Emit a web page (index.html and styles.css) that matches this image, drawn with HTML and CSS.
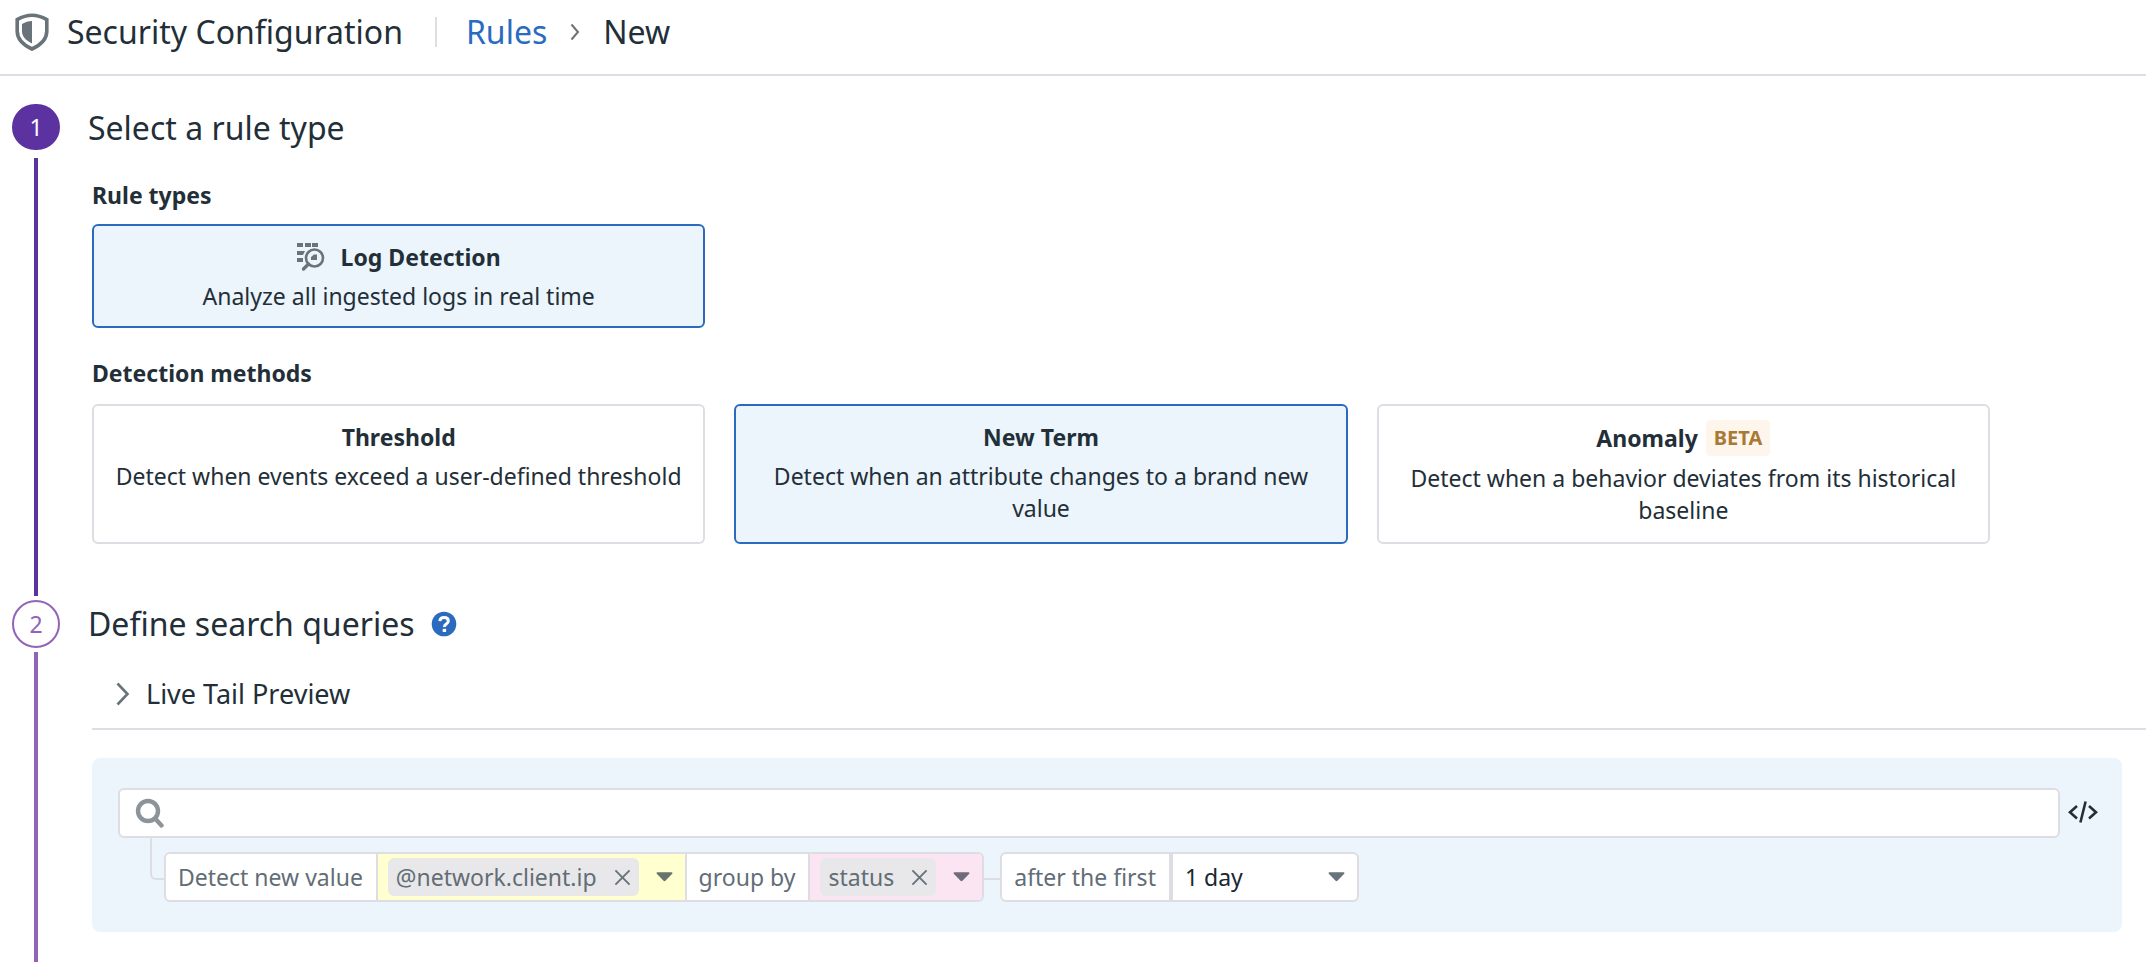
FILE: index.html
```html
<!DOCTYPE html>
<html lang="en">
<head>
<meta charset="utf-8">
<meta name="viewport" content="width=device-width, initial-scale=1">
<title>Security Configuration – New rule</title>
<link rel="stylesheet" href="styles.css">
</head>
<body>
<header class="topbar">
  <svg class="shield" width="34" height="38" viewBox="0 0 34 38" aria-hidden="true">
    <path d="M17 2.2C12 2.2 7 3.800 2.200 6.600V18c0 8 6 14 14.800 18 8.800-4 14.800-10 14.800-18V6.600C27 3.800 22 2.200 17 2.200z" fill="none" stroke="#68737a" stroke-width="3.600"/>
    <path d="M17 8c-3.500.2-6.500 1-10 3v7.500c0 5 4 9 10 12z" fill="#68737a"/>
  </svg>
  <h1 class="topbar-title">Security Configuration</h1>
  <span class="topbar-divider"></span>
  <nav class="crumbs" aria-label="Breadcrumb">
    <a class="crumb-link" href="#rules">Rules</a>
    <svg width="10" height="18" viewBox="0 0 10 18" aria-hidden="true"><path d="M1.500 1.500 8 9 1.500 16.500" fill="none" stroke="#68737a" stroke-width="2"/></svg>
    <span class="crumb-current">New</span>
  </nav>
</header>

<main class="steps">
  <section class="step">
    <div class="rail rail-active">
      <span class="marker">1</span>
      <span class="rail-line"></span>
    </div>
    <div class="step-main">
      <h2 class="step-title">Select a rule type</h2>
      <div class="step-body">
        <h3 class="label">Rule types</h3>
        <div class="cards">
          <button type="button" class="card card-selected" aria-pressed="true">
            <span class="card-title card-title-icon">
              <svg width="28" height="30" viewBox="0 0 28 30" aria-hidden="true">
                <g fill="#68737a">
                  <path d="M0 1h6v4H0zM8 1h6v4H8zM15 1h6v4h-6zM0 9h8l-2 4H0zM0 16h6v4H0z"/>
                  <path d="M14 18v-3l3-2.500h3V18z"/>
                </g>
                <circle cx="17.500" cy="16" r="8.500" fill="none" stroke="#68737a" stroke-width="2.600"/>
                <path d="M11.500 22 6.500 27" stroke="#68737a" stroke-width="3.400" stroke-linecap="round"/>
              </svg>
              Log Detection
            </span>
            <span class="card-text">Analyze all ingested logs in real time</span>
          </button>
        </div>
        <h3 class="label label-methods">Detection methods</h3>
        <div class="cards cards-methods">
          <button type="button" class="card" aria-pressed="false">
            <span class="card-title">Threshold</span>
            <span class="card-text">Detect when events exceed a user-defined threshold</span>
          </button>
          <button type="button" class="card card-selected" aria-pressed="true">
            <span class="card-title">New Term</span>
            <span class="card-text">Detect when an attribute changes to a brand new value</span>
          </button>
          <button type="button" class="card" aria-pressed="false">
            <span class="card-title">Anomaly <span class="badge">BETA</span></span>
            <span class="card-text">Detect when a behavior deviates from its historical baseline</span>
          </button>
        </div>
      </div>
    </div>
  </section>

  <section class="step step-last">
    <div class="rail">
      <span class="marker">2</span>
      <span class="rail-line"></span>
    </div>
    <div class="step-main">
      <h2 class="step-title">Define search queries
        <button type="button" class="icon-button" aria-label="Help">
          <svg width="26" height="26" viewBox="0 0 26 26" aria-hidden="true">
            <circle cx="13" cy="13" r="12.300" fill="#2a6bc0"/>
            <path d="M8.800 10.200C9 7.600 10.800 6.400 13.100 6.400c2.500 0 4.200 1.400 4.200 3.500 0 3.300-4 2.900-4 6" fill="none" stroke="#fff" stroke-width="3"/>
            <path d="M11.700 17.800h3.400v3.200h-3.400z" fill="#fff"/>
          </svg>
        </button>
      </h2>
      <div class="step-body">
        <button type="button" class="preview" aria-expanded="false">
          <svg width="14" height="24" viewBox="0 0 14 24" aria-hidden="true"><path d="M1.500 1.500 11.500 12 1.500 22.500" fill="none" stroke="#68737a" stroke-width="2.600"/></svg>
          Live Tail Preview
        </button>
        <div class="query">
          <div class="search-row">
            <label class="search">
              <svg width="30" height="32" viewBox="0 0 30 32" aria-hidden="true">
                <circle cx="14" cy="14" r="10" fill="none" stroke="#8c9499" stroke-width="4.400"/>
                <path d="m21.500 22 6 6.500" stroke="#8c9499" stroke-width="4.400" stroke-linecap="round"/>
              </svg>
              <input class="search-input" type="search" aria-label="Search query">
            </label>
            <button type="button" class="icon-button" aria-label="Edit as code">
              <svg width="30" height="24" viewBox="0 0 30 24" aria-hidden="true"><path d="M9 5 2 11.200 9 17.500M21 5l7 6.200-7 6.300M17.600 .5 12.400 21.500" fill="none" stroke="#232f38" stroke-width="2.600"/></svg>
            </button>
          </div>
          <div class="conditions">
            <span class="elbow"></span>
            <div class="group">
              <span class="cell">Detect new value</span>
              <div class="cell cell-field">
                <span class="pill">@network.client.ip
                  <button type="button" class="icon-button" aria-label="Remove @network.client.ip"><svg width="17" height="17" viewBox="0 0 18 18" aria-hidden="true"><path d="m1.500 1.500 15 15m0-15-15 15" stroke="#68737a" stroke-width="2"/></svg></button>
                </span>
                <button type="button" class="icon-button" aria-label="Choose attribute"><svg width="17" height="10" viewBox="0 0 18 10" aria-hidden="true"><path d="M1.500 0h15Q18 .3 17.200 1.500L10 9q-1 1-2 0L.8 1.500Q0 .3 1.500 0z" fill="#68736b"/></svg></button>
              </div>
              <span class="cell">group by</span>
              <div class="cell cell-group">
                <span class="pill">status
                  <button type="button" class="icon-button" aria-label="Remove status"><svg width="17" height="17" viewBox="0 0 18 18" aria-hidden="true"><path d="m1.500 1.500 15 15m0-15-15 15" stroke="#68737a" stroke-width="2"/></svg></button>
                </span>
                <button type="button" class="icon-button" aria-label="Choose grouping"><svg width="17" height="10" viewBox="0 0 18 10" aria-hidden="true"><path d="M1.500 0h15Q18 .3 17.200 1.500L10 9q-1 1-2 0L.8 1.500Q0 .3 1.500 0z" fill="#6f6b79"/></svg></button>
              </div>
            </div>
            <span class="link"></span>
            <div class="group">
              <label class="cell" for="window">after the first</label>
              <div class="cell cell-select">
                <select class="select" id="window"><option>1 day</option><option>7 days</option></select>
                <svg class="select-arrow" width="17" height="10" viewBox="0 0 18 10" aria-hidden="true"><path d="M1.500 0h15Q18 .3 17.200 1.500L10 9q-1 1-2 0L.8 1.500Q0 .3 1.500 0z" fill="#68737a"/></svg>
              </div>
            </div>
          </div>
        </div>
      </div>
    </div>
  </section>
</main>
</body>
</html>
```

FILE: styles.css
```css
:root {
  --text: #232f38;
  --muted: #626d75;
  --blue: #2a6bc0;
  --tint: #ecf5fc;
  --line: #dedde3;
  --violet: #5c32a0;
  --lilac: #9163ba;
}

* { box-sizing: border-box; }

body {
  margin: 0;
  min-height: 100vh;
  display: flex;
  flex-direction: column;
  background: #fff;
  color: var(--text);
  font: 23px/32px "Noto Sans", sans-serif;
}

h1, h2, h3 { margin: 0; font-weight: 400; }
button, input, select { font: inherit; color: inherit; }
svg { display: block; flex: none; }

.icon-button {
  display: flex;
  padding: 0;
  border: 0;
  background: none;
  cursor: pointer;
}

/* Header */
.topbar {
  display: flex;
  align-items: center;
  padding: 8px 15px 18px;
  border-bottom: 2px solid var(--line);
  line-height: 48px;
}
.shield { margin-right: 18px; }
.topbar-title { font-size: 32px; line-height: 48px; }
.topbar-divider {
  width: 2px;
  height: 30px;
  margin: 0 29px 0 32px;
  background: var(--line);
}
.crumbs {
  display: flex;
  align-items: center;
  gap: 23px;
  font-size: 32px;
}
.crumb-link { color: var(--blue); text-decoration: none; }

/* Steps */
.steps {
  flex: 1;
  display: flex;
  flex-direction: column;
  padding: 28px 0 0 12px;
}
.step { display: flex; gap: 28px; }
.step-last { flex: 1; }
.step-main { flex: 1; min-width: 0; }
.step-title {
  display: flex;
  align-items: center;
  gap: 16px;
  font-size: 32px;
  line-height: 48px;
}
.step-body { padding-left: 4px; }

.rail {
  display: flex;
  flex-direction: column;
  align-items: center;
  gap: 4px;
}
.marker {
  display: flex;
  align-items: center;
  justify-content: center;
  width: 48px;
  height: 48px;
  border: 2px solid var(--lilac);
  border-radius: 24px;
  color: var(--lilac);
}
.rail-line { flex: 1; width: 4px; background: var(--lilac); }
.rail-active { gap: 8px; padding-bottom: 4px; }
.rail-active .marker {
  height: 46px;
  border-color: var(--violet);
  background: var(--violet);
  color: #fff;
}
.rail-active .rail-line { background: var(--violet); }

/* Rule cards */
.label {
  margin: 26px 0 12px;
  font-size: 23px;
  line-height: 34px;
  font-weight: 700;
}
.label-methods { margin: 28px 0 14px; }
.cards {
  display: grid;
  grid-template-columns: repeat(3, 1fr);
  gap: 29px;
  padding-right: 156px;
}
.step:first-child .step-body { padding-bottom: 56px; }
.card {
  display: flex;
  flex-direction: column;
  align-items: center;
  gap: 6px;
  padding: 14px 12px;
  border: 2px solid var(--line);
  border-radius: 6px;
  background: #fff;
  text-align: center;
  cursor: pointer;
}
.cards-methods .card { padding-bottom: 16px; }
.card-selected { border-color: var(--blue); background: var(--tint); }
.card-title {
  display: flex;
  align-items: center;
  gap: 8px;
  font-weight: 700;
  line-height: 34px;
}
.card-title-icon { gap: 16px; }
.badge {
  padding: 0 8px;
  border-radius: 4px;
  background: #fef6ec;
  color: #a87a35;
  font-size: 20px;
  line-height: 36px;
}

/* Query editor */
.preview {
  display: flex;
  align-items: center;
  gap: 16px;
  width: 100%;
  margin-top: 26px;
  padding: 0 24px 14px;
  border: 0;
  border-bottom: 2px solid var(--line);
  background: none;
  font-size: 27px;
  line-height: 40px;
  cursor: pointer;
}
.query {
  margin: 28px 24px 30px 0;
  padding: 30px 24px 30px 26px;
  border-radius: 8px;
  background: var(--tint);
}
.search-row { display: flex; align-items: center; gap: 8px; }
.search {
  flex: 1;
  display: flex;
  align-items: center;
  gap: 8px;
  height: 50px;
  padding: 0 14px;
  border: 2px solid var(--line);
  border-radius: 6px;
  background: #fff;
}
.search-input {
  flex: 1;
  min-width: 0;
  border: 0;
  outline: 0;
  background: none;
}
.conditions { display: flex; align-items: flex-end; padding-left: 32px; }
.elbow {
  width: 14px;
  height: 42px;
  margin-bottom: 22px;
  border: solid var(--line);
  border-width: 0 0 2px 2px;
  border-bottom-left-radius: 6px;
}
.link {
  width: 16px;
  height: 2px;
  margin-bottom: 22px;
  background: var(--line);
}
.group {
  display: flex;
  height: 50px;
  border: 2px solid var(--line);
  border-radius: 6px;
  background: #fff;
  color: var(--muted);
  overflow: hidden;
}
.cell { display: flex; align-items: center; padding: 0 13px 0 12px; }
.cell + .cell { border-left: 2px solid var(--line); }
.cell-field,
.cell-group { gap: 17px; padding: 0 12px 0 10px; }
.cell-field { background: #ffffcf; }
.cell-group { background: #fbe5f3; }
.pill {
  display: flex;
  align-items: center;
  gap: 17px;
  height: 38px;
  padding: 0 8px;
  border-radius: 6px;
  background: #e8e8ea;
}
.cell.cell-select {
  position: relative;
  padding: 0;
  border-left-width: 4px;
  color: #1b2730;
}
.select {
  width: 184px;
  height: 46px;
  padding: 0 40px 0 12px;
  border: 0;
  background: none;
  appearance: none;
}
.select-arrow {
  position: absolute;
  right: 12px;
  pointer-events: none;
}
```
